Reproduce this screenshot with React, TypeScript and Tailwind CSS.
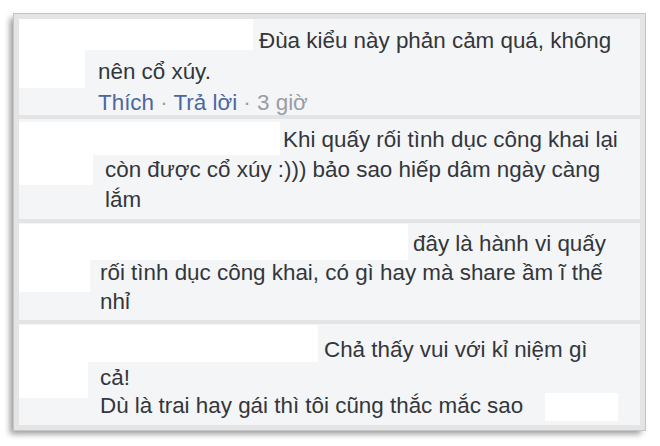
const font = { fontFamily: '"Liberation Sans", Arial, sans-serif' };

type Line = { pl: number; text: React.ReactNode };
type Mask = { x: number; y: number; w: number; h: number };

type Comment = {
  h: number;
  top: number;
  lh: number;
  masks: Mask[];
  lines: Line[];
};

const comments: Comment[] = [
  {
    h: 96,
    top: 6,
    lh: 31,
    masks: [
      { x: 0, y: 0, w: 66, h: 69 },
      { x: 0, y: 0, w: 234, h: 31 },
    ],
    lines: [
      { pl: 240, text: "Đùa kiểu này phản cảm quá, không" },
      { pl: 79, text: "nên cổ xúy." },
      {
        pl: 79,
        text: (
          <>
            <span className="text-[#4b67a1]">Thích</span>
            <span className="text-[#9a9da3]"> · </span>
            <span className="text-[#4b67a1]">Trả lời</span>
            <span className="text-[#9a9da3]"> · 3 giờ</span>
          </>
        ),
      },
    ],
  },
  {
    h: 100,
    top: 6,
    lh: 30,
    masks: [
      { x: 0, y: 3, w: 74, h: 63 },
      { x: 0, y: 3, w: 261, h: 33 },
    ],
    lines: [
      { pl: 264, text: "Khi quấy rối tình dục công khai lại" },
      { pl: 86, text: "còn được cổ xúy :))) bảo sao hiếp dâm ngày càng" },
      { pl: 86, text: "lắm" },
    ],
  },
  {
    h: 97,
    top: 6,
    lh: 29,
    masks: [
      { x: 0, y: 1, w: 71, h: 68 },
      { x: 0, y: 1, w: 389, h: 36 },
    ],
    lines: [
      { pl: 394, text: "đây là hành vi quấy" },
      { pl: 81, text: "rối tình dục công khai, có gì hay mà share ầm ĩ thế" },
      { pl: 81, text: "nhỉ" },
    ],
  },
  {
    h: 101,
    top: 12,
    lh: 28,
    masks: [
      { x: 0, y: 1, w: 69, h: 73 },
      { x: 0, y: 1, w: 299, h: 37 },
      { x: 526, y: 69, w: 73, h: 28 },
    ],
    lines: [
      { pl: 305, text: "Chả thấy vui với kỉ niệm gì" },
      { pl: 81, text: "cả!" },
      { pl: 81, text: "Dù là trai hay gái thì tôi cũng thắc mắc sao" },
    ],
  },
];

function CommentBlock({ c }: { c: Comment }) {
  return (
    <div className="relative overflow-hidden bg-[#f4f5f7]" style={{ height: c.h }}>
      {c.masks.map((m, i) => (
        <div
          key={i}
          className="absolute bg-white"
          style={{ left: m.x, top: m.y, width: m.w, height: m.h }}
        />
      ))}
      <div className="relative flex flex-col" style={{ paddingTop: c.top }}>
        {c.lines.map((l, i) => (
          <div
            key={i}
            className="whitespace-nowrap text-[22.4px] text-[#33363b]"
            style={{ paddingLeft: l.pl, lineHeight: `${c.lh}px` }}
          >
            {l.text}
          </div>
        ))}
      </div>
    </div>
  );
}

export default function App() {
  return (
    <div className="h-[446px] w-[660px] overflow-hidden bg-white pl-[14px] pt-[14px]" style={font}>
      <div className="flex h-[416px] w-[631px] flex-col gap-[4px] border-[5px] border-[#e4e4e4] bg-[#e3e4e6] shadow-[-4px_4px_6px_rgba(0,0,0,0.4)] outline outline-1 outline-[#c4c4c4]">
        {comments.map((c, i) => (
          <CommentBlock key={i} c={c} />
        ))}
      </div>
    </div>
  );
}
